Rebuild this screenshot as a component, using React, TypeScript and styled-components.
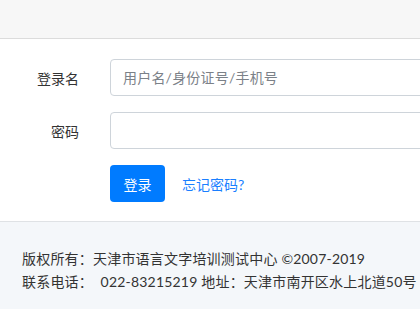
import React from "react";
import styled, { createGlobalStyle } from "styled-components";

const GlobalStyle = createGlobalStyle`
  html, body {
    margin: 0;
    padding: 0;
    overflow: hidden;
    background: #ffffff;
    font-family: "Lato", "Noto Sans CJK SC", sans-serif;
    color: #212529;
  }
`;

const Page = styled.div`
  display: flex;
  flex-direction: column;
  width: 420px;
  height: 309px;
  overflow: hidden;
`;

const Header = styled.div`
  height: 38px;
  flex-shrink: 0;
  background-color: #f7f7f7;
  border-bottom: 1px solid #dcdcdc;
`;

const Form = styled.form`
  display: flex;
  flex-direction: column;
  gap: 16px;
  padding: 20px 0 19px 0;
  border-bottom: 1px solid #dfe2e5;
  overflow: hidden;
`;

const Row = styled.div`
  display: flex;
  align-items: center;
  gap: 31px;
`;

const Label = styled.label`
  width: 79px;
  flex-shrink: 0;
  text-align: right;
  font-size: 14px;
  color: #333;
`;

const Spacer = styled.div`
  width: 79px;
  flex-shrink: 0;
`;

const Input = styled.input`
  box-sizing: border-box;
  width: 360px;
  height: 37px;
  flex-shrink: 0;
  padding: 0 12px;
  border: 1px solid #ced4da;
  border-radius: 4px;
  font-family: inherit;
  font-size: 14px;
  letter-spacing: 0.2px;
  color: #495057;
  background: #fff;
  outline: none;

  &::placeholder {
    color: #7b8188;
  }
`;

const Actions = styled.div`
  display: flex;
  align-items: center;
  gap: 17px;
`;

const Button = styled.button`
  box-sizing: border-box;
  width: 55px;
  height: 37px;
  border: none;
  border-radius: 4px;
  background-color: #007bff;
  color: #fff;
  font-family: inherit;
  font-size: 14px;
  cursor: pointer;
`;

const Link = styled.a`
  color: #1a7fff;
  font-size: 14px;
  text-decoration: none;
`;

const Footer = styled.footer`
  flex: 1;
  background-color: #f4f7fa;
  padding: 25px 22px 0 22px;
  font-size: 14px;
  line-height: 23px;
  letter-spacing: 0.2px;
  color: #333;
  white-space: nowrap;
`;

const FooterLine = styled.div``;

export default function App() {
  return (
    <>
      <GlobalStyle />
      <Page>
        <Header />
        <Form onSubmit={(e) => e.preventDefault()}>
          <Row>
            <Label>登录名</Label>
            <Input placeholder="用户名/身份证号/手机号" />
          </Row>
          <Row>
            <Label>密码</Label>
            <Input type="password" />
          </Row>
          <Row>
            <Spacer />
            <Actions>
              <Button type="submit">登录</Button>
              <Link href="#">忘记密码?</Link>
            </Actions>
          </Row>
        </Form>
        <Footer>
          <FooterLine>版权所有：天津市语言文字培训测试中心 ©2007-2019</FooterLine>
          <FooterLine>联系电话：&nbsp;&nbsp;022-83215219 地址：天津市南开区水上北道50号</FooterLine>
        </Footer>
      </Page>
    </>
  );
}
